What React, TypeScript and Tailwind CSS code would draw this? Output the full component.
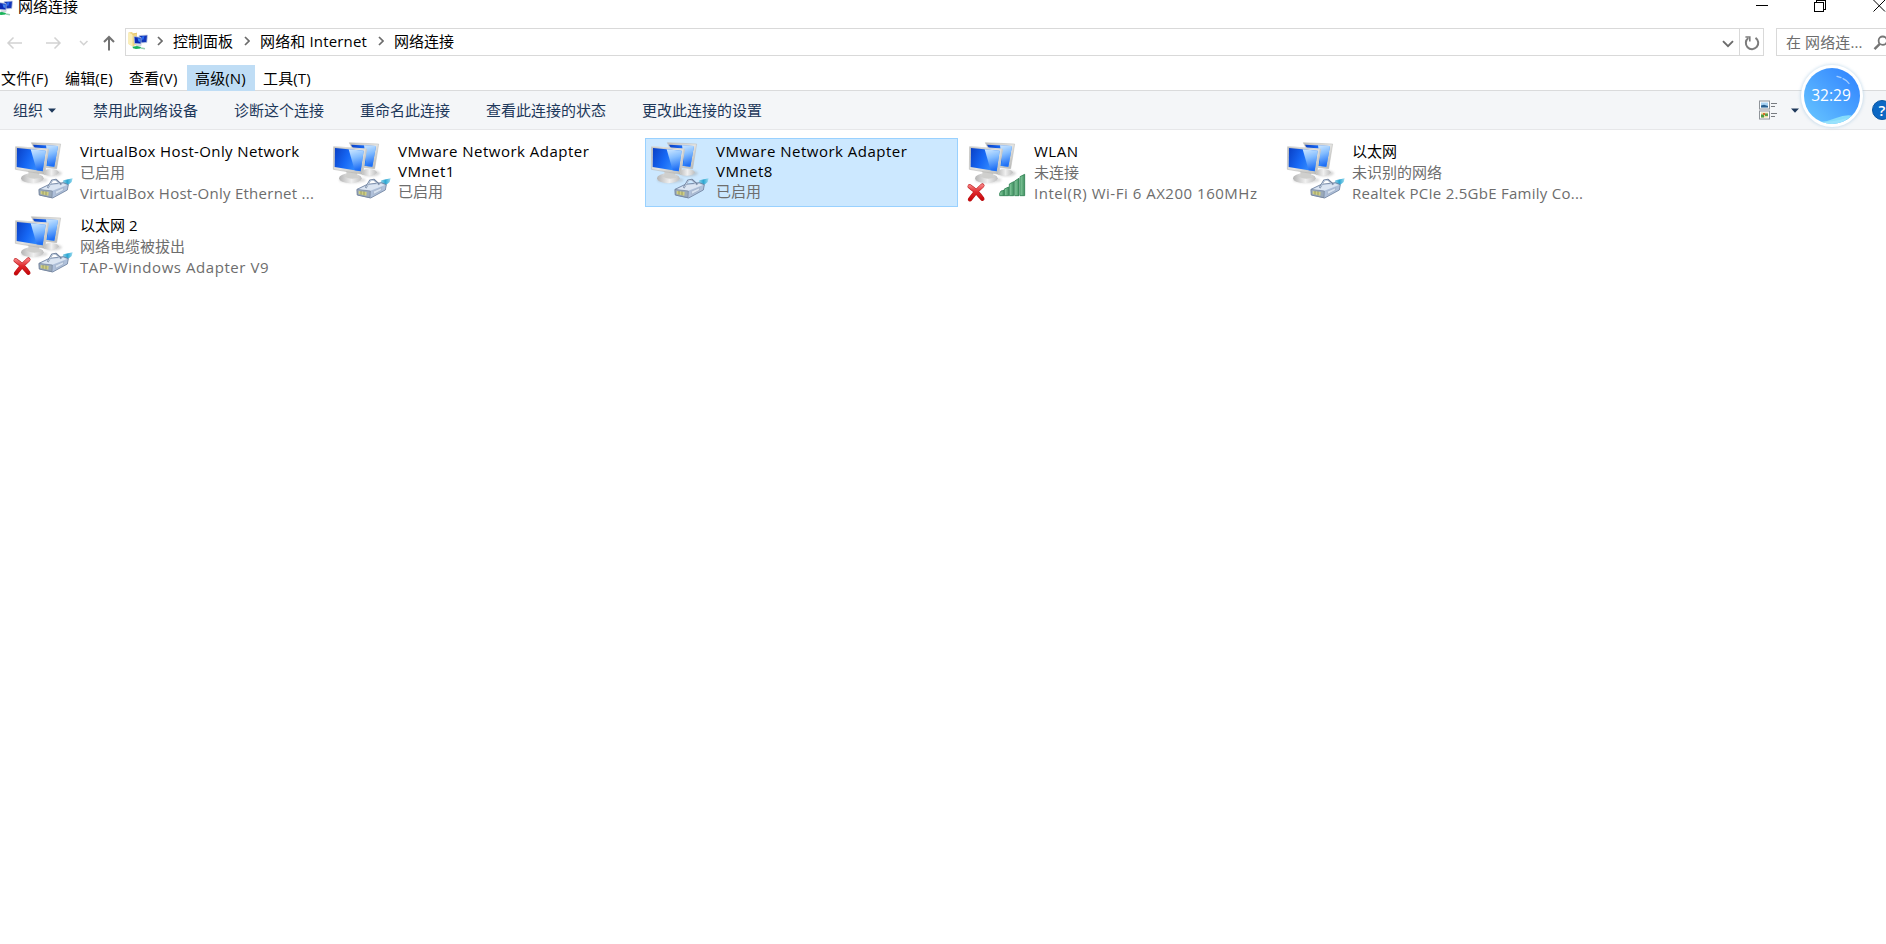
import type { ReactNode } from "react";

type Overlay = "plug" | "signal";

interface Connection {
  name: ReactNode;
  nameClass?: string;
  status: string;
  device?: string;
  deviceClass?: string;
  overlay: Overlay;
  disconnected?: boolean;
  selected?: boolean;
}

const connections: Connection[] = [
  {
    name: "VirtualBox Host-Only Network",
    nameClass: "tracking-[0.37px]",
    status: "已启用",
    device: "VirtualBox Host-Only Ethernet ...",
    deviceClass: "tracking-[0.26px]",
    overlay: "plug",
  },
  {
    name: (
      <>
        VMware Network Adapter
        <br />
        VMnet1
      </>
    ),
    nameClass: "tracking-[0.49px] leading-[20px]",
    status: "已启用",
    overlay: "plug",
  },
  {
    name: (
      <>
        VMware Network Adapter
        <br />
        VMnet8
      </>
    ),
    nameClass: "tracking-[0.49px] leading-[20px]",
    status: "已启用",
    overlay: "plug",
    selected: true,
  },
  {
    name: "WLAN",
    nameClass: "tracking-[0.5px]",
    status: "未连接",
    device: "Intel(R) Wi-Fi 6 AX200 160MHz",
    deviceClass: "tracking-[0.52px]",
    overlay: "signal",
    disconnected: true,
  },
  {
    name: "以太网",
    status: "未识别的网络",
    device: "Realtek PCIe 2.5GbE Family Co...",
    deviceClass: "tracking-[0.26px]",
    overlay: "plug",
  },
  {
    name: "以太网 2",
    status: "网络电缆被拔出",
    device: "TAP-Windows Adapter V9",
    deviceClass: "tracking-[0.56px]",
    overlay: "plug",
    disconnected: true,
  },
];

function Gradients() {
  return (
    <svg width="0" height="0" className="absolute" aria-hidden="true">
      <defs>
        <linearGradient id="screen" x1="0" y1="0" x2="1" y2="0.35">
          <stop offset="0" stopColor="#0a3fc4" />
          <stop offset="0.5" stopColor="#1668f5" />
          <stop offset="1" stopColor="#3a92ff" />
        </linearGradient>
        <linearGradient id="glare" x1="0" y1="0" x2="0.2" y2="1">
          <stop offset="0" stopColor="#cfe8ff" />
          <stop offset="0.45" stopColor="#84bdff" />
          <stop offset="1" stopColor="#1f6ff5" />
        </linearGradient>
        <linearGradient id="bezel" x1="0" y1="0" x2="1" y2="1">
          <stop offset="0" stopColor="#bcbcba" />
          <stop offset="0.5" stopColor="#e4e4e2" />
          <stop offset="1" stopColor="#b4b4b2" />
        </linearGradient>
        <linearGradient id="foot" x1="0" y1="0" x2="1" y2="0">
          <stop offset="0" stopColor="#b4b4b4" />
          <stop offset="0.55" stopColor="#f0f0f0" />
          <stop offset="1" stopColor="#c0c0c0" />
        </linearGradient>
        <linearGradient id="bar" x1="0" y1="0" x2="1" y2="0">
          <stop offset="0" stopColor="#8ccfa4" />
          <stop offset="1" stopColor="#3f915f" />
        </linearGradient>
        <linearGradient id="cross" x1="0" y1="0" x2="0" y2="1">
          <stop offset="0" stopColor="#f4797b" />
          <stop offset="0.45" stopColor="#e02a2e" />
          <stop offset="1" stopColor="#c8080c" />
        </linearGradient>
        <linearGradient id="cable" x1="0" y1="0" x2="1" y2="0">
          <stop offset="0" stopColor="#a9dcee" />
          <stop offset="0.5" stopColor="#2ba6d2" />
          <stop offset="1" stopColor="#9edcf0" />
        </linearGradient>
        <filter id="soft" x="-20%" y="-20%" width="140%" height="140%">
          <feGaussianBlur stdDeviation="3" />
        </filter>
      </defs>
    </svg>
  );
}

function NetworkIcon({ overlay, disconnected }: { overlay: Overlay; disconnected?: boolean }) {
  return (
    <svg viewBox="27 24 198 207" className="h-[69px] w-[66px] shrink-0">
      <ellipse cx="158" cy="130" rx="28" ry="9" fill="#999" opacity="0.4" filter="url(#soft)" />
      <ellipse cx="152" cy="127" rx="24" ry="10" fill="url(#foot)" />
      <path d="M94 38 L182 42 L170 116 L130 112 Z" fill="url(#bezel)" stroke="#b9b9b7" strokeWidth="1.5" strokeLinejoin="round" />
      <path d="M99 44 L174 48 L163 110 L134 107 Z" fill="url(#screen)" />
      <path d="M138 46 L174 48 L163 110 L146 108 Z" fill="url(#glare)" />

      <ellipse cx="103" cy="150" rx="40" ry="9" fill="#999" opacity="0.35" filter="url(#soft)" />
      <ellipse cx="97" cy="145" rx="34" ry="15" fill="url(#foot)" />
      <path d="M84 122 L118 126 C115 136 120 140 124 142 C108 149 90 147 78 139 C86 136 87 130 84 122Z" fill="#cfcfcd" />
      <path d="M47 50 L145 57 L134 133 L46 118 Z" fill="url(#bezel)" stroke="#b1b1af" strokeWidth="1.5" strokeLinejoin="round" />
      <path d="M51 54 L137 62 L128 124 L50 111 Z" fill="url(#screen)" />
      <path d="M92 58 L137 62 L128 124 L110 121 Z" fill="url(#glare)" />
      <path d="M47 50 L145 57" stroke="#e2e2e0" strokeWidth="2.5" />
      <path d="M145 58 L134 133" stroke="#cfcfcd" strokeWidth="3" />

      {overlay === "plug" && (
        <g strokeLinejoin="round">
          <path d="M186 163 L190 151 L218 145 L215 156 L198 170 Z" fill="url(#cable)" />
          <path d="M117 178 L148 163 L190 158 L205 164 L202 180 L158 204 L118 195 Z" fill="#afc0da" stroke="#6f829f" strokeWidth="2.5" />
          <path d="M119 179 L149 165 L190 161 L201 165 L157 182 Z" fill="#dbe5f2" />
          <path d="M117 178 L157 183 L156 203 L118 195 Z" fill="#9aa9ba" stroke="#64758e" strokeWidth="1.5" />
          <path d="M122 183 L146 186 L145 197 L122 192 Z" fill="#cfce82" />
          <path d="M129 183 V194 M138 184 V196" stroke="#7d8259" strokeWidth="2" />
          <path d="M143 174 L156 151 L168 149 L184 164" fill="none" stroke="#71839f" strokeWidth="5.5" />
          <path d="M144 173 L157 152 L167 151 L181 164" fill="none" stroke="#d9e5f3" strokeWidth="2.5" />
          <path d="M166 184 L191 173 L190 181 L167 193 Z" fill="#d7e2f0" stroke="#92a2bb" strokeWidth="1.5" />
        </g>
      )}

      {overlay === "signal" && (
        <g fill="url(#bar)" stroke="#2d7e50" strokeWidth="2.5" strokeLinejoin="round">
          <path d="M137 190 L141 183 L151 181 V197 H137Z" />
          <path d="M151 177 L164 171 V197 H151Z" />
          <path d="M166 162 L179 155 V197 H166Z" />
          <path d="M182 153 L195 145 V197 H182Z" />
          <path d="M198 140 L212 133 V197 H198Z" />
        </g>
      )}

      {disconnected && (
        <g strokeLinecap="round" fill="none">
          <path d="M47 169 Q68 183 85 206 M85 167 Q64 184 48 208" stroke="#b91a1c" strokeWidth="13" />
          <path d="M47 169 Q68 183 85 206 M85 167 Q64 184 48 208" stroke="url(#cross)" strokeWidth="10" />
        </g>
      )}
    </svg>
  );
}

function SmallMonitors() {
  return (
    <>
      <path d="M11 4.5 L19.5 4 L18.8 11.5 L12 12Z" fill="#1236b8" stroke="#c9d3e4" strokeWidth="0.8" />
      <path d="M14 5.5 L16.5 5 L15.5 8.5 L13.5 9Z" fill="#2a6af2" />
      <path d="M6 5.5 L13 6.5 L13 13 L6.5 12.5Z" fill="#0b2bb4" stroke="#b9c8e2" strokeWidth="0.8" />
      <path d="M9.5 7.2 L12.4 7.5 L12.4 11 L10.5 10.5Z" fill="#3b82f4" />
      <path d="M8 13.5 H14 L13 14.7 H7.5Z" fill="#bfc6d0" />
      <path d="M4.5 15.8 L9 15 L13 16 L12.5 17.6 L8 18 L5 17.2Z" fill="#19b35a" />
      <path d="M13 17 L17 17.8" stroke="#9acfb4" strokeWidth="1.4" />
    </>
  );
}

function FolderIcon() {
  return (
    <svg viewBox="0 0 20 20" className="ml-[2px] h-5 w-5 shrink-0">
      <path d="M0.5 1.5 L4 1 L5 2.2 L9 2 V13 L5 15.5 L0.5 13Z" fill="#f0d684" />
      <path d="M0.5 1.5 L4.5 3.5 V15.5 L0.5 13Z" fill="#fbefb9" />
      <path d="M4.5 3.5 L9 2" stroke="#dfc26a" strokeWidth="0.8" />
      <SmallMonitors />
    </svg>
  );
}

function Chevron({ className }: { className: string }) {
  return (
    <svg viewBox="0 0 6 10" className={`h-[10px] w-[6px] shrink-0 ${className}`}>
      <path d="M1 1 L5 5 L1 9" fill="none" stroke="#6b6b6b" strokeWidth="1.7" />
    </svg>
  );
}

function TitleBar() {
  return (
    <header className="flex h-[28px] items-start justify-between">
      <div className="flex items-start">
        <svg viewBox="7 3 13 16" className="h-[16px] w-[13px] shrink-0">
          <SmallMonitors />
        </svg>
        <span className="ml-[5px] leading-[12px]">网络连接</span>
      </div>
      <svg viewBox="0 0 132 14" className="h-[14px] w-[132px]" fill="none" stroke="#000" strokeWidth="1" shapeRendering="crispEdges">
        <path d="M2 5.5 H14" />
        <path d="M60.5 2.5 H69.5 V11.5 H60.5Z M62.5 2.5 V0.5 H71.5 V9.5 H69.5" />
        <path d="M119.5 0 L131 11.5 M131 0 L119.5 11.5" shapeRendering="auto" />
      </svg>
    </header>
  );
}

function AddressBar() {
  return (
    <div className="flex h-[28px] items-stretch">
      <svg viewBox="0 0 125 28" className="h-[28px] w-[125px] shrink-0" fill="none">
        <g stroke="#d2d2d2" strokeWidth="1.5">
          <path d="M8 15 H22 M13.5 9.5 L8 15 L13.5 20.5" />
          <path d="M46 15 H60 M54.5 9.5 L60 15 L54.5 20.5" />
          <path d="M80 13 L83.7 16.8 L87.5 13" />
        </g>
        <path d="M109 22.5 V9.5 M104 14 L109 9 L114 14" stroke="#727272" strokeWidth="2" />
      </svg>
      <div className="flex w-[1639px] items-center border border-[#d9d9d9] pb-[2px] leading-[20px]">
        <FolderIcon />
        <Chevron className="ml-[9px]" />
        <span className="ml-[10px] w-[60px]">控制面板</span>
        <Chevron className="ml-[11px]" />
        <span className="ml-[10px] w-[107px] whitespace-nowrap tracking-[0.15px]">网络和 Internet</span>
        <Chevron className="ml-[11px]" />
        <span className="ml-[10px] w-[60px]">网络连接</span>
        <svg viewBox="0 0 12 8" className="mt-[5px] mr-[5px] ml-auto h-2 w-3">
          <path d="M1 1.2 L6 6.2 L11 1.2" fill="none" stroke="#6b6b6b" strokeWidth="1.9" />
        </svg>
        <div className="-mb-[2px] flex h-[26px] w-[24px] items-center justify-center border-l border-[#d9d9d9]">
          <svg viewBox="0 0 16 16" className="mt-[2px] h-4 w-4" fill="none" stroke="#7c7c7c" strokeWidth="2">
            <path d="M11.5 2.8 A6.2 6.2 0 1 1 4.3 3" />
            <path d="M1.4 2 H5.8 V6.6" strokeWidth="1.6" />
          </svg>
        </div>
      </div>
      <div className="ml-3 flex min-w-0 flex-1 items-center overflow-hidden border border-r-0 border-[#d9d9d9] pl-[9px] text-[#6d6d6d]">
        <span className="w-[79px] shrink-0 whitespace-nowrap leading-[20px] tracking-[0.1px]">在 网络连...</span>
        <svg viewBox="0 0 16 16" className="mt-px ml-[8px] h-4 w-4 shrink-0" fill="none" stroke="#767676">
          <circle cx="9.8" cy="5.7" r="4.2" strokeWidth="1.8" />
          <path d="M6.8 8.8 L1.5 14.2" strokeWidth="2.4" />
        </svg>
      </div>
    </div>
  );
}

function MenuBar() {
  return (
    <nav className="mt-[9px] flex h-[25px] leading-[26px] whitespace-nowrap">
      <span className="w-[64px] pl-px tracking-[0.15px]">文件(F)</span>
      <span className="w-[64px] pl-px tracking-[0.15px]">编辑(E)</span>
      <span className="w-[59px] pl-px tracking-[0.15px]">查看(V)</span>
      <span className="h-[26px] w-[68px] bg-[#bfddf5] pl-[8px] tracking-[0.15px]">高级(N)</span>
      <span className="pl-[8px] tracking-[0.15px]">工具(T)</span>
    </nav>
  );
}

function ToolBar() {
  return (
    <div className="flex h-[40px] items-center border-y border-t-[#dadbdc] border-b-[#e6e7e9] bg-[#f4f6f8] pl-[13px] text-[#1e395b]">
      <span>组织</span>
      <svg viewBox="0 0 8 5" className="ml-[5px] h-[5px] w-[8px]">
        <path d="M0 0.5 H8 L4 4.7Z" fill="#1e395b" />
      </svg>
      <div className="ml-[37px] flex gap-9">
        <span>禁用此网络设备</span>
        <span>诊断这个连接</span>
        <span>重命名此连接</span>
        <span>查看此连接的状态</span>
        <span>更改此连接的设置</span>
      </div>
      <svg viewBox="0 0 18 20" className="mr-[14px] ml-auto h-5 w-[18px]">
        <rect x="0.5" y="1" width="10" height="8" fill="#fff" stroke="#8f949a" />
        <rect x="2" y="2.5" width="7" height="5" fill="#a9d3f3" />
        <path d="M2 5.5 L5 4.8 L9 6 V7.5 H2Z" fill="#286091" />
        <rect x="0.5" y="11" width="10" height="8" fill="#fff" stroke="#8f949a" />
        <rect x="2" y="12.5" width="7" height="5" fill="#f0dca0" />
        <path d="M2 14.5 H5 V17.5 H2Z" fill="#4f9b45" />
        <path d="M6 13.5 H9 V16 H6Z" fill="#5b9d4d" />
        <path d="M4 13 H6 V15 H4Z" fill="#d8702b" />
        <path d="M12 3.5 H18 M12 6.5 H16 M12 13.5 H18 M12 16.5 H16" stroke="#777b80" />
      </svg>
      <svg viewBox="0 0 8 5" className="mr-[73px] h-[5px] w-[8px]">
        <path d="M0 0.5 H8 L4 4.7Z" fill="#1e395b" />
      </svg>
      <div className="flex h-5 w-[14px] shrink-0 overflow-hidden">
        <span className="h-5 w-5 shrink-0 rounded-full border border-[#0a559f] bg-[#0c68c4] text-center text-[15px] leading-[18px] font-semibold text-white">
          ?
        </span>
      </div>
    </div>
  );
}

function TimerBubble() {
  return (
    <div className="absolute top-[65px] left-[1801px] flex h-[62px] w-[62px] items-center justify-center rounded-full bg-white shadow-[0_0_3px_1px_rgba(150,190,220,0.4)]">
      <div className="relative flex h-[56px] w-[56px] items-center justify-center overflow-hidden rounded-full bg-linear-to-tr from-[#6ac8ff] via-[#4ba3ff] to-[#2e7fff]">
        <svg viewBox="0 0 56 56" className="absolute inset-0 h-full w-full">
          <path d="M33 8.3 L37 9.7 M39 10.7 Q43 12.4 45 15.5" fill="none" stroke="#d4eaff" strokeWidth="1.3" strokeLinecap="round" opacity="0.7" />
          <path d="M16 54 Q25 53 32 50 Q42 46 50 48 L46 56 H16Z" fill="#86dcfb" />
          <path d="M16 54 Q30 54 43 50 L38 56 H18Z" fill="#a6e8fd" opacity="0.6" />
        </svg>
        <span className="relative -mt-[2px] -ml-[2px] text-[15.5px] leading-5 text-white">32:29</span>
      </div>
    </div>
  );
}

function ConnectionTile({ item }: { item: Connection }) {
  return (
    <div className={`flex h-[69px] w-[313px] ${item.selected ? "bg-[#cce8ff] outline outline-1 -outline-offset-1 outline-[#99d1ff]" : ""}`}>
      <NetworkIcon overlay={item.overlay} disconnected={item.disconnected} />
      <div className="ml-[5px] min-w-0 flex-1 pt-[3px] leading-[21px] whitespace-nowrap">
        <div className={`text-black ${item.nameClass ?? ""}`}>{item.name}</div>
        <div className="text-[#6d6d6d]">{item.status}</div>
        {item.device && <div className={`text-[#6d6d6d] ${item.deviceClass ?? ""}`}>{item.device}</div>}
      </div>
    </div>
  );
}

export default function App() {
  return (
    <div className="relative h-[944px] w-full overflow-hidden bg-white font-['Open_Sans','Noto_Sans_CJK_SC',sans-serif] text-[15px] text-black">
      <Gradients />
      <TitleBar />
      <AddressBar />
      <MenuBar />
      <ToolBar />
      <main className="grid grid-cols-[repeat(5,313px)] gap-[5px] pt-2 pl-[9px]">
        {connections.map((item, i) => (
          <ConnectionTile key={i} item={item} />
        ))}
      </main>
      <TimerBubble />
    </div>
  );
}
